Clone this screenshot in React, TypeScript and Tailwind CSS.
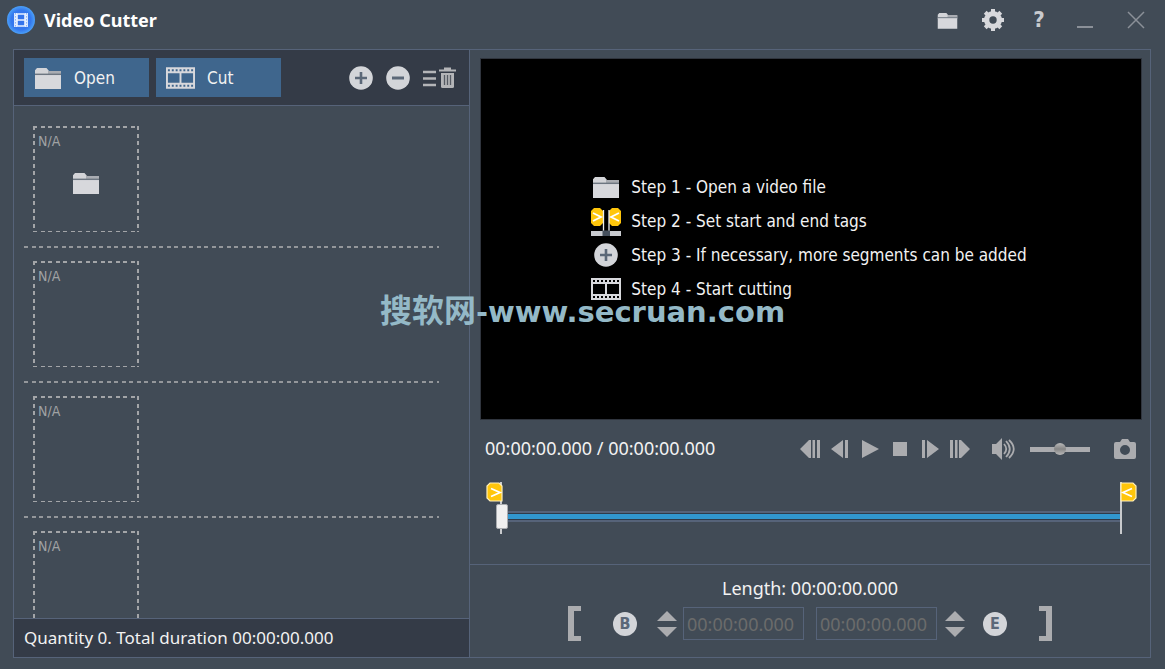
import { useState } from "react";

const FolderIcon = ({ className }: { className: string }) => (
  <svg viewBox="0 0 28 22" className={className} aria-hidden="true">
    <path d="M1 9V3.2L3 1h9.5L15 4h12v5z" fill="#d3d4d8" />
    <path d="M14 4h13v3H14z" fill="#a9acb2" />
    <path d="M1 6.6h26v1.6H1z" fill="#6d7681" />
    <path d="M1 8.2h26V22H1z" fill="#d7d8dc" />
  </svg>
);

const FilmIcon = ({ className }: { className: string }) => (
  <svg viewBox="0 0 30 22" className={className} aria-hidden="true">
    <path
      fillRule="evenodd"
      fill="#d7d8dc"
      d="M0 0h30v22H0zM2 6v10h12V6zM16 6v10h12V6zM2 2v2h2V2zM6 2v2h2V2zM10 2v2h2V2zM14 2v2h2V2zM18 2v2h2V2zM22 2v2h2V2zM26 2v2h2V2zM2 18v2h2v-2zM6 18v2h2v-2zM10 18v2h2v-2zM14 18v2h2v-2zM18 18v2h2v-2zM22 18v2h2v-2zM26 18v2h2v-2z"
    />
  </svg>
);

const PlusIcon = () => (
  <svg viewBox="0 0 24 24" className="size-6" aria-hidden="true">
    <circle cx="12" cy="12" r="11.8" fill="#d3d5d9" />
    <path d="M12 6v12M6 12h12" stroke="#5b6878" strokeWidth="2.600" />
  </svg>
);

const MinusIcon = () => (
  <svg viewBox="0 0 24 24" className="size-6" aria-hidden="true">
    <circle cx="12" cy="12" r="11.8" fill="#d3d5d9" />
    <path d="M6 12h12" stroke="#5b6878" strokeWidth="3" />
  </svg>
);

const ClearIcon = () => (
  <svg viewBox="0 0 34 22" className="h-[22px] w-[34px]" aria-hidden="true">
    <path d="M0 5h13M0 11.500h13M0 18h13" stroke="#b4b5b8" strokeWidth="2.600" />
    <path d="M16 3.500h17M21 1.500h7" stroke="#b4b5b8" strokeWidth="2" />
    <path d="M18 6h13v13.500q0 1.500-1.500 1.500h-10Q18 21 18 19.500z" fill="#b4b5b8" />
    <path d="M21.500 8v10M24.500 8v10M27.500 8v10" stroke="#555a63" strokeWidth="1.300" />
  </svg>
);

const GearIcon = () => (
  <svg viewBox="0 0 22 22" className="size-[22px]" aria-hidden="true">
    <g fill="#d7d8dc">
      {[0, 45, 90, 135].map((deg) => (
        <rect key={deg} x="9" y="0" width="4" height="22" transform={`rotate(${deg} 11 11)`} />
      ))}
      <circle cx="11" cy="11" r="9" />
    </g>
    <circle cx="11" cy="11" r="3.700" fill="#414b56" />
  </svg>
);

const LogoIcon = () => (
  <svg viewBox="0 0 28 28" className="size-7" aria-hidden="true">
    <defs>
      <radialGradient id="logo">
        <stop offset="0" stopColor="#3572ea" />
        <stop offset="0.7" stopColor="#3478ee" />
        <stop offset="1" stopColor="#4ba0f8" />
      </radialGradient>
    </defs>
    <circle cx="14" cy="14" r="14" fill="url(#logo)" />
    <path d="M8.500 7v14M19.500 7v14" stroke="#e8f1ff" strokeWidth="2.800" />
    <path d="M8.500 7v14M19.500 7v14" stroke="#8fb5f7" strokeWidth="1" strokeDasharray="1.600 1.400" />
    <path d="M10 8h8v12h-8zM10 14h8" fill="none" stroke="#e8f1ff" strokeWidth="1.600" />
  </svg>
);

const TagsIcon = () => (
  <svg viewBox="0 0 30 29" className="h-[29px] w-[30px]" aria-hidden="true">
    <path d="M3 1h6l3 3v12l-3 3H3l-3-3V4z" fill="#ffc60b" />
    <path d="M21 1h6l3 3v12l-3 3h-6l-3-3V4z" fill="#ffc60b" />
    <path d="M2 6l8 4-8 4M28 6l-8 4 8 4" fill="none" stroke="#fff" strokeWidth="1.800" />
    <path d="M12.500 3v21M18 3v21" stroke="#eee" strokeWidth="1.300" />
    <path d="M0 24h30v5H0z" fill="#c9cbd0" />
    <path d="M11.500 23.500h7.500V29h-7.500z" fill="#46505d" />
  </svg>
);

const steps = [
  { icon: <FolderIcon className="h-[22px] w-7" />, text: "Step 1 - Open a video file" },
  { icon: <TagsIcon />, text: "Step 2 - Set start and end tags" },
  { icon: <PlusIcon />, text: "Step 3 - If necessary, more segments can be added" },
  { icon: <FilmIcon className="h-[22px] w-[30px]" />, text: "Step 4 - Start cutting" },
];

const playback = [
  { label: "Previous keyframe", d: "M0 9L9 0v18zM9 0h2v18H9zM12.500 0h2.500v18h-2.500zM17 0h3v18h-3z" },
  { label: "Previous frame", d: "M1 9L13 0v18zM15 0h3v18h-3z" },
  { label: "Play", d: "M2 0l17 9-17 9z" },
  { label: "Stop", d: "M3 2h14v14H3z" },
  { label: "Next frame", d: "M2 0h3v18H2zM7 0l12 9-12 9z" },
  { label: "Next keyframe", d: "M0 0h3v18H0zM5 0h2.500v18H5zM9 0h2v18H9zM11 0l9 9-9 9z" },
];

const Spinner = ({ label }: { label: string }) => (
  <div className="flex w-5 flex-col gap-[6px]">
    <button type="button" aria-label={`Increase ${label}`}>
      <svg viewBox="0 0 20 10" className="block h-[10px] w-5" fill="#abacaf">
        <path d="M10 0l10 10H0z" />
      </svg>
    </button>
    <button type="button" aria-label={`Decrease ${label}`}>
      <svg viewBox="0 0 20 10" className="block h-[10px] w-5" fill="#abacaf">
        <path d="M0 0h20L10 10z" />
      </svg>
    </button>
  </div>
);

const LetterButton = ({ letter, label }: { letter: string; label: string }) => (
  <button
    type="button"
    aria-label={label}
    className="flex size-6 items-center justify-center rounded-full bg-[#d3d5d9] text-base leading-none font-bold text-[#5b6878]"
  >
    {letter}
  </button>
);

const Segment = ({ first }: { first: boolean }) => (
  <li className="shrink-0">
    <div className="mx-[9px] flex size-[106px] flex-col px-[5px] pt-[5px] [background:repeating-linear-gradient(90deg,#a3a5a8_0_4px,transparent_4px_8px,#a3a5a8_8px_12px,transparent_12px_15px)_top/100%_2px_no-repeat,repeating-linear-gradient(90deg,#a3a5a8_0_4px,transparent_4px_8px,#a3a5a8_8px_12px,transparent_12px_15px)_bottom/100%_1px_no-repeat,repeating-linear-gradient(#a3a5a8_0_4px,transparent_4px_8px,#a3a5a8_8px_12px,transparent_12px_15px)_left/2px_100%_no-repeat,repeating-linear-gradient(#a3a5a8_0_4px,transparent_4px_8px,#a3a5a8_8px_12px,transparent_12px_15px)_right/2px_100%_no-repeat]">
      <span className="text-sm leading-5 text-[#a0a2a4]">N/A</span>
      {first && (
        <button type="button" aria-label="Open a video file" className="mt-[21px] self-center">
          <FolderIcon className="h-[22px] w-7" />
        </button>
      )}
    </div>
    <div className="mt-[14px] mb-[13px] h-0.5 bg-[repeating-linear-gradient(90deg,#94979b_0_4px,transparent_4px_8px,#94979b_8px_12px,transparent_12px_15px)]" />
  </li>
);

const App = () => {
  const [position, setPosition] = useState(0);
  const [volume, setVolume] = useState(50);

  return (
    <div className="relative flex h-screen flex-col overflow-hidden bg-[#414b56] pb-[11px] font-['DejaVu_Sans_Condensed','Noto_Sans',sans-serif] text-[17px] text-[#f2f2f2]">
      <header className="flex h-[49px] shrink-0 items-center pr-px pb-[9px] pl-[7px]">
        <LogoIcon />
        <h1 className="ml-[9px] flex-1 font-['Noto_Sans',sans-serif] text-lg font-bold text-white">Video Cutter</h1>
        <button type="button" aria-label="Open folder" className="flex w-[46px] justify-center">
          <FolderIcon className="h-[17px] w-[21px]" />
        </button>
        <button type="button" aria-label="Settings" className="flex w-[46px] justify-center">
          <GearIcon />
        </button>
        <button type="button" aria-label="Help" className="w-[46px] text-[22px] leading-6 font-bold text-[#c9cbcf]">
          ?
        </button>
        <button type="button" aria-label="Minimize" className="flex w-[46px] justify-center">
          <svg viewBox="0 0 16 16" className="size-4">
            <path d="M0 15h16" stroke="#8b9098" strokeWidth="2" />
          </svg>
        </button>
        <button type="button" aria-label="Close" className="flex w-14 justify-center">
          <svg viewBox="0 0 18 18" className="size-[18px]">
            <path d="M1 1l16 16M17 1L1 17" stroke="#8b9098" strokeWidth="1.500" />
          </svg>
        </button>
      </header>

      <main className="mr-[14px] ml-[13px] flex min-h-0 flex-1 border border-[#566379]">
        <section className="flex w-[456px] shrink-0 flex-col border-r border-[#566379]">
          <div className="flex h-14 shrink-0 items-center gap-[7px] border-b border-[#566379] bg-[#343b47] pr-3 pl-[10px]">
            <button type="button" className="flex h-[39px] w-[125px] items-center gap-3 bg-[#3f668d] pl-[10px]">
              <FolderIcon className="h-[22px] w-7" />
              <span className="pt-0.5">Open</span>
            </button>
            <button type="button" className="flex h-[39px] w-[125px] items-center gap-3 bg-[#3f668d] pl-[10px]">
              <FilmIcon className="h-[22px] w-[29px]" />
              <span className="pt-0.5">Cut</span>
            </button>
            <div className="ml-auto flex items-center gap-[13px]">
              <button type="button" aria-label="Add segment">
                <PlusIcon />
              </button>
              <button type="button" aria-label="Remove segment">
                <MinusIcon />
              </button>
              <button type="button" aria-label="Clear list">
                <ClearIcon />
              </button>
            </div>
          </div>
          <ul className="flex min-h-0 flex-1 flex-col overflow-hidden pt-5 pr-[30px] pl-[10px]">
            {[0, 1, 2, 3].map((i) => (
              <Segment key={i} first={i === 0} />
            ))}
          </ul>
          <p className="flex h-[39px] shrink-0 items-center border-t border-[#566379] bg-[#343b47] pl-[10px] font-['Noto_Sans',sans-serif]">
            Quantity 0. Total duration 00:00:00.000
          </p>
        </section>

        <section className="flex min-w-0 flex-1 flex-col">
          <div className="mt-2 mr-2 ml-[10px] flex min-h-0 flex-1 items-center justify-center border border-[#30353e] bg-black pr-1 pb-0.5">
            <ul>
              {steps.map((step) => (
                <li key={step.text} className="flex h-[34px] items-center gap-[10px]">
                  <span className="flex w-[30px] justify-center">{step.icon}</span>
                  <span className="pt-0.5">{step.text}</span>
                </li>
              ))}
            </ul>
          </div>

          <div className="flex h-[58px] shrink-0 items-center pr-[14px] pl-[15px]">
            <span className="mr-auto pb-0.5 font-['Noto_Sans',sans-serif] text-lg">00:00:00.000 / 00:00:00.000</span>
            {playback.map((p) => (
              <button key={p.label} type="button" aria-label={p.label} className="flex w-[30px] justify-center">
                <svg viewBox="0 0 20 18" className="h-[18px] w-5" fill="#abacaf">
                  <path d={p.d} />
                </svg>
              </button>
            ))}
            <button type="button" aria-label="Mute" className="ml-[13px] flex w-[30px] justify-center">
              <svg viewBox="0 0 24 22" className="h-[22px] w-6" fill="#abacaf">
                <path d="M1 6h4l6-6v22l-6-6H1z" />
                <path d="M13 6q4.500 5 0 10M15 3q7.500 8 0 16M18 2q9.500 9 0 18" fill="none" stroke="#abacaf" strokeWidth="1.800" />
              </svg>
            </button>
            <input
              type="range"
              aria-label="Volume"
              value={volume}
              onChange={(e) => setVolume(Number(e.target.value))}
              className="ml-3 h-3 w-[60px] appearance-none bg-[linear-gradient(#abacaf,#abacaf)] bg-[length:100%_5px] bg-center bg-no-repeat [&::-webkit-slider-thumb]:size-3 [&::-webkit-slider-thumb]:appearance-none [&::-webkit-slider-thumb]:rounded-full [&::-webkit-slider-thumb]:bg-[linear-gradient(#b9b9b9,#858585,#b9b9b9)]"
            />
            <button type="button" aria-label="Take snapshot" className="ml-6">
              <svg viewBox="0 0 22 20" className="block h-5 w-[22px]">
                <path
                  fillRule="evenodd"
                  fill="#abacaf"
                  d="M2 3h4l2-3h6l2 3h4q2 0 2 2v13q0 2-2 2H2q-2 0-2-2V5q0-2 2-2zM11 6a5 5 0 1 0 0 10 5 5 0 0 0 0-10z"
                />
              </svg>
            </button>
          </div>

          <div className="relative mr-[30px] ml-[26px] h-[86px] shrink-0 pt-[26px]">
            <div className="absolute top-1 left-[-10px] flex h-[52px] w-4 flex-col border-r-2 border-[#c8cacd]">
              <svg viewBox="0 0 17 20" className="h-5 w-[17px] shrink-0">
                <path d="M4 1h9l3 3v15H4l-3-3V4z" fill="#ffc60b" stroke="#fff0bd" strokeWidth="1.200" />
                <path d="M5 6.500l9 4-9 4" fill="none" stroke="#fff" strokeWidth="1.800" />
              </svg>
            </div>
            <input
              type="range"
              aria-label="Timeline"
              value={position}
              onChange={(e) => setPosition(Number(e.target.value))}
              className="relative block h-[25px] w-full appearance-none bg-[linear-gradient(#566379_0_2px,#303b49_2px_3px,#3197cf_3px_8px,#303b49_8px_9px,#566379_9px_11px)] bg-[length:100%_11px] bg-center bg-no-repeat [&::-webkit-slider-thumb]:h-[25px] [&::-webkit-slider-thumb]:w-3 [&::-webkit-slider-thumb]:appearance-none [&::-webkit-slider-thumb]:rounded-xs [&::-webkit-slider-thumb]:border [&::-webkit-slider-thumb]:border-[#a9acb0] [&::-webkit-slider-thumb]:bg-[#f0f0f0]"
            />
            <div className="absolute top-1 right-[-16px] h-[52px] w-4 border-l-2 border-[#c8cacd]">
              <svg viewBox="0 0 17 20" className="-ml-0.5 h-5 w-[17px]">
                <path d="M1 1h12l3 3v12l-3 3H1z" fill="#ffc60b" stroke="#fff0bd" strokeWidth="1.200" />
                <path d="M12 6.500l-9 4 9 4" fill="none" stroke="#fff" strokeWidth="1.800" />
              </svg>
            </div>
          </div>

          <div className="flex h-[93px] shrink-0 flex-col items-center border-t border-[#566379] pt-[11px]">
            <p className="font-['Noto_Sans',sans-serif] text-lg leading-6">Length: 00:00:00.000</p>
            <div className="mt-[6px] flex items-center">
              <button type="button" aria-label="Go to start">
                <svg viewBox="0 0 13 35" className="block h-[35px] w-[13px]">
                  <path d="M0 0h13v5H6v25h7v5H0z" fill="#abacaf" />
                </svg>
              </button>
              <div className="ml-8">
                <LetterButton letter="B" label="Set start tag" />
              </div>
              <div className="mr-[6px] ml-5">
                <Spinner label="start time" />
              </div>
              <input
                type="text"
                aria-label="Start time"
                disabled
                defaultValue="00:00:00.000"
                className="h-[33px] w-[121px] border border-[#566379] px-[3px] font-['Noto_Sans',sans-serif] text-lg text-[#6b6b6b]"
              />
              <input
                type="text"
                aria-label="End time"
                disabled
                defaultValue="00:00:00.000"
                className="ml-3 h-[33px] w-[121px] border border-[#566379] px-[3px] font-['Noto_Sans',sans-serif] text-lg text-[#6b6b6b]"
              />
              <div className="mr-[18px] ml-2">
                <Spinner label="end time" />
              </div>
              <LetterButton letter="E" label="Set end tag" />
              <button type="button" aria-label="Go to end" className="ml-8">
                <svg viewBox="0 0 13 35" className="block h-[35px] w-[13px]">
                  <path d="M0 0h13v35H0v-5h7V5H0z" fill="#abacaf" />
                </svg>
              </button>
            </div>
          </div>
        </section>
      </main>

      <div className="pointer-events-none absolute top-[291px] left-1/2 flex -translate-x-1/2 items-start font-bold whitespace-nowrap text-[#94b9c7]">
        <span className="font-['Noto_Sans_CJK_SC',sans-serif] text-[32px] leading-[34px]">搜软网</span>
        <span className="font-['DejaVu_Sans',sans-serif] text-[29px] leading-[42px]">-www.secruan.com</span>
      </div>
    </div>
  );
};

export default App;
